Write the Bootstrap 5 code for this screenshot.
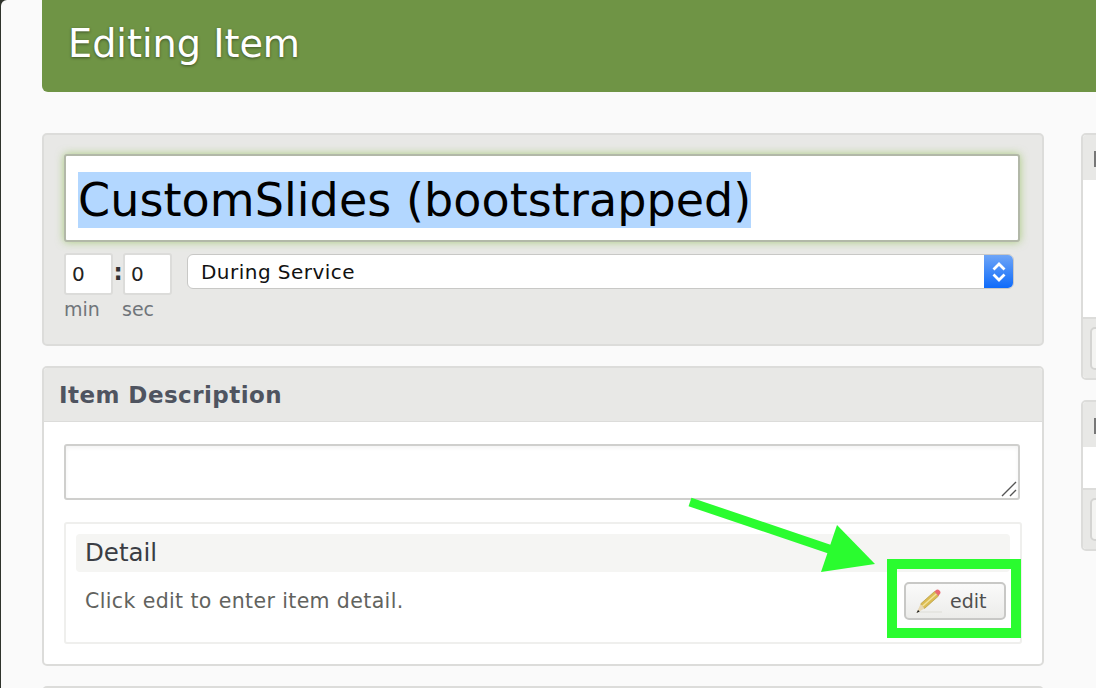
<!DOCTYPE html>
<html lang="en">
<head>
<meta charset="utf-8">
<title>Editing Item</title>
<link rel="stylesheet" href="https://cdn.jsdelivr.net/npm/bootstrap@5.3.0/dist/css/bootstrap.min.css">
<style>
html{background:#2f332c;height:688px;overflow:hidden}
body{height:688px;overflow:hidden;background:#fafafa;font-family:"DejaVu Sans",sans-serif;margin-left:1px;border-top-left-radius:6px}
.stage{width:1054px;height:688px;margin-left:41px;position:relative;overflow:hidden}
.head-bar{height:92px;background:#6f9445;border-radius:0 0 0 6px;padding:20px 26px 0;color:#fff;font-size:38.200px;line-height:48px;text-shadow:0 1px 3px rgba(0,0,0,.45)}
.cols{padding-top:41px;gap:37px}
.main-col{width:1002px;flex:none}
.side-col{width:300px;flex:none}
.pane{border:2px solid #dcdcda;border-radius:5px;background:#fff;margin-bottom:20px}
.pane-grey{background:#e8e8e6;padding:19px 20px 0;height:213px}
.title-box{height:88px;width:956px;background:#fff;border:2px solid #b2b8a8;border-radius:3px;box-shadow:0 0 9px rgba(130,185,60,.6);padding:16px 12px;font-size:46px;letter-spacing:.07px;line-height:56px;color:#000;white-space:nowrap}
.sel-text{display:inline-block;height:56px;background:#b3d7ff}
.time-row{margin-top:11px}
.time-box{width:49px;height:42px;background:#fff;border:2px solid #dcdcda;border-radius:3px;font-size:20px;line-height:38px;padding-left:6px;color:#222}
.colon{width:10px;font-size:23px;font-weight:700;text-align:center;line-height:38px;color:#333}
.time-lbl{width:49px;font-size:19px;color:#70757a;margin-top:2px;line-height:24px}
.time-gap{width:9px}
.sel-box{height:35px;margin:1px 0 0 15px;width:827px;border:1px solid #c8c8c6;border-radius:6px;background:#fff;overflow:hidden;font-size:20px;letter-spacing:.47px;line-height:34px;color:#111;padding-left:13px}
.sel-arrows{width:29px;background:linear-gradient(#6ea5f7,#0f6bfa)}
.pane-head{height:54px;background:#e8e8e6;border-bottom:1px solid #dcdcda;border-radius:3px 3px 0 0;padding:0 15px;font-size:23px;font-weight:700;line-height:54px;color:#4f5460;letter-spacing:.45px}
.pane-body{height:242px;padding:22px 20px 0}
.desc-box{height:56px;border:2px solid #cfcfcd;border-radius:3px;background:#fff;box-shadow:inset 0 2px 4px rgba(0,0,0,.05);width:956px}
.detail-box{margin-top:22px;width:958px;height:122px;border:2px solid #efefed;border-radius:3px;padding:10px 10px 0}
.detail-head{height:38px;background:#f5f5f3;border-radius:4px;padding-left:9px;font-size:24.500px;line-height:38px;color:#3a3d44}
.detail-line{padding:9px 4px 0 9px}
.detail-text{font-size:20.500px;letter-spacing:.38px;color:#62635e;line-height:38px;padding-top:1px;white-space:nowrap}
.edit-btn{width:102px;height:38px;border:2px solid #c8c8c6;border-radius:5px;background:linear-gradient(#fafafa,#ececea);font-size:19px;color:#4f4f4f;line-height:34px;padding:0 0 0 8px;gap:8px;margin-top:1px}
.stub-head{height:45px;background:#e8e8e6;border-radius:3px 3px 0 0;padding:16px 0 0 11px}
.stub-foot{background:#e8e8e6;border-top:2px solid #dcdcda;padding:8px 7px;border-radius:0 0 3px 3px}
.stub-btn{width:80px;height:43px;border:2px solid #d4d4d2;border-radius:5px;background:#f4f4f2}
.stub-one .stub-white{height:137px}
.stub-two .stub-white{height:41px}
.stub-tick{display:block;width:4px;height:16px;background:#777}
.pane-cut{height:40px}
.mark-over{position:absolute;left:0;top:0;pointer-events:none}
.green-frame{position:absolute;left:845px;top:559px;width:134px;height:79px;border:10px solid #2afc2f}
</style>
</head>
<body>
<div class="stage">
  <div class="head-bar">Editing Item</div>
  <div class="cols d-flex">
    <div class="main-col">
      <div class="pane pane-grey">
        <div class="title-box"><span class="sel-text">CustomSlides (bootstrapped)</span></div>
        <div class="time-row d-flex align-items-start">
          <div>
            <div class="d-flex">
              <div class="time-box">0</div><div class="colon">:</div><div class="time-box">0</div>
            </div>
            <div class="d-flex">
              <div class="time-lbl">min</div><div class="time-gap"></div><div class="time-lbl">sec</div>
            </div>
          </div>
          <div class="sel-box d-flex justify-content-between">
            <span>During Service</span>
            <span class="sel-arrows d-flex align-items-center justify-content-center">
              <svg width="16" height="26" viewBox="0 0 16 26" fill="none" stroke="#fff" stroke-width="2.800"><path d="M2.500 10.500 8 5l5.500 5.500M2.500 15.500 8 21l5.500-5.500"/></svg>
            </span>
          </div>
        </div>
      </div>
      <div class="pane">
        <div class="pane-head">Item Description</div>
        <div class="pane-body">
          <div class="desc-box d-flex justify-content-end align-items-end">
            <svg width="18" height="18" viewBox="0 0 18 18" stroke="#555" stroke-width="1.400"><path d="M2 16 16 2M10 16l6-6"/></svg>
          </div>
          <div class="detail-box">
            <div class="detail-head">Detail</div>
            <div class="detail-line d-flex justify-content-between align-items-start">
              <div class="detail-text">Click edit to enter item detail.</div>
              <button type="button" class="edit-btn d-flex align-items-center">
                <svg width="28" height="28" viewBox="0 0 28 28"><path d="M3 24h25v2H3z" fill="#e6e6e2"/><path d="M6.500 17 20.500 4.500l4 4.500L10.500 21.500z" fill="#dcbc52" stroke="#b39a42" stroke-width=".7"/><path d="M8.500 19.300 22.500 6.700" stroke="#f3e29c" stroke-width="1.500"/><path d="M20.500 4.500l1-1a2.800 2.800 0 0 1 4 4L24.500 9z" fill="#ea6a70"/><path d="M6.500 17l4 4.500-8 4.500z" fill="#e8d8b4"/><path d="M4 23 2.500 26l3.200-1.500z" fill="#1c1c1c"/></svg>
                <span>edit</span>
              </button>
            </div>
          </div>
        </div>
      </div>
      <div class="pane pane-cut"></div>
    </div>
    <div class="side-col">
      <div class="pane stub-one">
        <div class="stub-head"><span class="stub-tick"></span></div>
        <div class="stub-white"></div>
        <div class="stub-foot"><div class="stub-btn"></div></div>
      </div>
      <div class="pane stub-two">
        <div class="stub-head"><span class="stub-tick"></span></div>
        <div class="stub-white"></div>
        <div class="stub-foot"><div class="stub-btn"></div></div>
      </div>
    </div>
  </div>
  <div class="green-frame"></div>
  <svg class="mark-over" width="1054" height="688" viewBox="42 0 1054 688"><path d="M690 502 832 550" stroke="#2afc2f" stroke-width="9" fill="none"/><path d="M837 525 875 564 821 572z" fill="#2afc2f"/></svg>
</div>
</body>
</html>
